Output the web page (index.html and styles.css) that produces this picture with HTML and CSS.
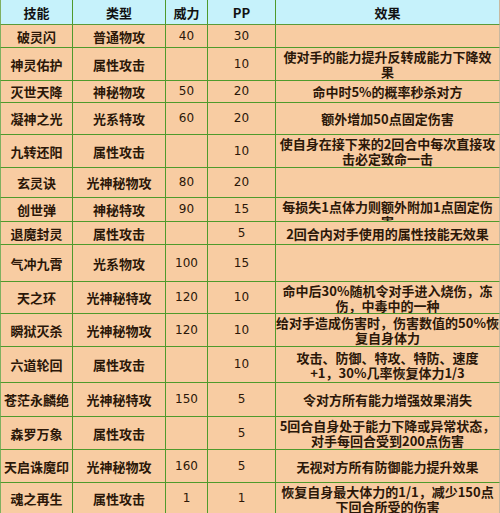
FILE: index.html
```html
<!DOCTYPE html>
<html lang="zh">
<head>
<meta charset="utf-8">
<title>技能表</title>
<link rel="stylesheet" href="styles.css">
</head>
<body>
<div class="table">
  <div class="c hd">技能</div><div class="c hd">类型</div><div class="c hd">威力</div><div class="c hd">PP</div><div class="c hd">效果</div>

  <div class="c">破灵闪</div><div class="c">普通物攻</div><div class="c n">40</div><div class="c n">30</div><div class="c e"></div>

  <div class="c">神灵佑护</div><div class="c">属性攻击</div><div class="c n"></div><div class="c n">10</div><div class="c e">使对手的能力提升反转成能力下降效<br>果</div>

  <div class="c">灭世天降</div><div class="c">神秘物攻</div><div class="c n">50</div><div class="c n">20</div><div class="c e">命中时5%的概率秒杀对方</div>

  <div class="c">凝神之光</div><div class="c">光系特攻</div><div class="c n">60</div><div class="c n">20</div><div class="c e">额外增加50点固定伤害</div>

  <div class="c">九转还阳</div><div class="c">属性攻击</div><div class="c n"></div><div class="c n">10</div><div class="c e">使自身在接下来的2回合中每次直接攻<br>击必定致命一击</div>

  <div class="c">玄灵诀</div><div class="c">光神秘物攻</div><div class="c n">80</div><div class="c n">20</div><div class="c e"></div>

  <div class="c">创世弹</div><div class="c">神秘特攻</div><div class="c n">90</div><div class="c n">15</div><div class="c e top">每损失1点体力则额外附加1点固定伤<br>害</div>

  <div class="c">退魔封灵</div><div class="c">属性攻击</div><div class="c n"></div><div class="c n">5</div><div class="c e">2回合内对手使用的属性技能无效果</div>

  <div class="c">气冲九霄</div><div class="c">光系物攻</div><div class="c n">100</div><div class="c n">15</div><div class="c e"></div>

  <div class="c">天之环</div><div class="c">光神秘特攻</div><div class="c n">120</div><div class="c n">10</div><div class="c e">命中后30%随机令对手进入烧伤，冻<br>伤，中毒中的一种</div>

  <div class="c">瞬狱灭杀</div><div class="c">光神秘物攻</div><div class="c n">120</div><div class="c n">10</div><div class="c e">给对手造成伤害时，伤害数值的50%恢<br>复自身体力</div>

  <div class="c">六道轮回</div><div class="c">属性攻击</div><div class="c n"></div><div class="c n">10</div><div class="c e">攻击、防御、特攻、特防、速度<br>+1，30%几率恢复体力1/3</div>

  <div class="c">苍茫永麟绝</div><div class="c">光神秘特攻</div><div class="c n">150</div><div class="c n">5</div><div class="c e">令对方所有能力增强效果消失</div>

  <div class="c">森罗万象</div><div class="c">属性攻击</div><div class="c n"></div><div class="c n">5</div><div class="c e">5回合自身处于能力下降或异常状态，<br>对手每回合受到200点伤害</div>

  <div class="c">天启诛魔印</div><div class="c">光神秘物攻</div><div class="c n">160</div><div class="c n">5</div><div class="c e">无视对方所有防御能力提升效果</div>

  <div class="c">魂之再生</div><div class="c">属性攻击</div><div class="c n">1</div><div class="c n">1</div><div class="c e">恢复自身最大体力的1/1，减少150点<br>下回合所受的伤害</div>
</div>
</body>
</html>
```

FILE: styles.css
```css
html, body {
  margin: 0;
  padding: 0;
  width: 500px;
  height: 513px;
  overflow: hidden;
  background: #f8cca2;
}

.table {
  display: grid;
  grid-template-columns: 73px 93px 42px 68px 224px;
  grid-template-rows: 25px 23px 33px 22px 32px 33px 30px 24px 23px 37px 32px 33px 36px 34px 33px 33px 32px;
  width: 500px;
  font-family: "Noto Sans CJK SC", "Noto Sans", sans-serif;
  font-size: 13px;
  font-weight: 700;
  line-height: 15px;
  color: #2b1708;
  background: #f8cca2;
}

.c {
  display: flex;
  align-items: center;
  justify-content: center;
  text-align: center;
  overflow: hidden;
  border-right: 1px solid #4f9a2c;
  border-bottom: 1px solid #4f9a2c;
  padding: 0 3px;
  box-sizing: border-box;
  white-space: nowrap;
}

.c:nth-child(5n+1) {
  border-left: 1px solid #7fb060;
}

.c:nth-child(5n) {
  border-right: 1px solid #c8b8a0;
}

.hd {
  background: #c6f2fb;
  color: #111;
  border-bottom-color: #5a9a3a;
}

.n {
  font-family: "DejaVu Sans", "Noto Sans CJK SC", sans-serif;
  font-weight: 400;
  font-size: 12px;
  color: #2b1708;
}

.hd.n {
  font-family: "DejaVu Sans", "Noto Sans CJK SC", sans-serif;
  font-weight: 400;
  font-size: 12px;
  color: #111;
}

.e {
  padding: 0 2px;
}

.top {
  align-items: flex-start;
  padding-top: 1px;
}
```
